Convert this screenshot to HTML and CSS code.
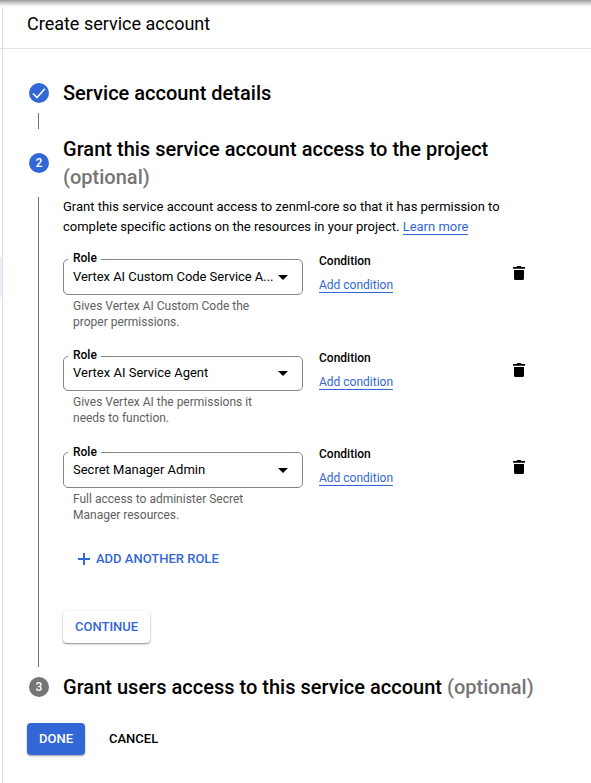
FILE: index.html
```html
<!DOCTYPE html>
<html lang="en">
<head>
<meta charset="utf-8">
<title>Create service account</title>
<link rel="stylesheet" href="styles.css">
</head>
<body>
<div class="page">
  <div class="rail"><div class="rail-head"></div><div class="rail-active"></div></div>
  <main class="main">
    <header class="header"><h1>Create service account</h1></header>
    <section class="step">
      <div class="marker"><span class="badge"><svg width="20" height="20" viewBox="0 0 20 20"><path d="M4 10.500l4 4L15.800 5.800" fill="none" stroke="#fff" stroke-width="1.600"/></svg></span></div>
      <h2 class="title">Service account details</h2>
      <div class="line"></div>
      <div class="short"></div>
    </section>
    <section class="step">
      <div class="marker"><span class="badge">2</span></div>
      <h2 class="title">Grant this service account access to the project <span class="optional">(optional)</span></h2>
      <div class="line"></div>
      <div class="body">
        <p class="intro">Grant this service account access to zenml-core so that it has permission to complete specific actions on the resources in your project. <a class="link">Learn more</a></p>
        <div class="role role-first">
          <div class="field">
            <div class="select"><span class="label">Role</span><span class="value">Vertex AI Custom Code Service A...</span><svg class="arrow" width="10" height="5" viewBox="0 0 10 5"><path d="M0 0h10L5 5z"/></svg></div>
            <p class="hint">Gives Vertex AI Custom Code the proper permissions.</p>
          </div>
          <div class="condition"><strong>Condition</strong><a class="link">Add condition</a></div>
          <svg class="trash" width="12" height="14" viewBox="0 0 12 14"><path d="M0 1h3.500l.8-1h3.400l.8 1H12v1.700H0zM1 4h10v8.500Q11 14 9.500 14h-7Q1 14 1 12.500z"/></svg>
        </div>
        <div class="role role-second">
          <div class="field">
            <div class="select"><span class="label">Role</span><span class="value">Vertex AI Service Agent</span><svg class="arrow" width="10" height="5" viewBox="0 0 10 5"><path d="M0 0h10L5 5z"/></svg></div>
            <p class="hint">Gives Vertex AI the permissions it needs to function.</p>
          </div>
          <div class="condition"><strong>Condition</strong><a class="link">Add condition</a></div>
          <svg class="trash" width="12" height="14" viewBox="0 0 12 14"><path d="M0 1h3.500l.8-1h3.400l.8 1H12v1.700H0zM1 4h10v8.500Q11 14 9.500 14h-7Q1 14 1 12.500z"/></svg>
        </div>
        <div class="role role-third">
          <div class="field">
            <div class="select"><span class="label">Role</span><span class="value">Secret Manager Admin</span><svg class="arrow" width="10" height="5" viewBox="0 0 10 5"><path d="M0 0h10L5 5z"/></svg></div>
            <p class="hint">Full access to administer Secret Manager resources.</p>
          </div>
          <div class="condition"><strong>Condition</strong><a class="link">Add condition</a></div>
          <svg class="trash" width="12" height="14" viewBox="0 0 12 14"><path d="M0 1h3.500l.8-1h3.400l.8 1H12v1.700H0zM1 4h10v8.500Q11 14 9.500 14h-7Q1 14 1 12.500z"/></svg>
        </div>
        <button class="btn add"><svg width="12" height="12" viewBox="0 0 12 12"><path d="M5 0h2v5h5v2H7v5H5V7H0V5h5z" fill="#3367d6"/></svg>ADD ANOTHER ROLE</button>
        <button class="btn continue">CONTINUE</button>
      </div>
    </section>
    <section class="step">
      <div class="marker"><span class="badge pending">3</span></div>
      <h2 class="title">Grant users access to this service account <span class="optional">(optional)</span></h2>
    </section>
    <footer class="actions"><button class="btn done">DONE</button><button class="btn cancel">CANCEL</button></footer>
  </main>
</div>
</body>
</html>
```
FILE: styles.css
```css
* { box-sizing: border-box; }
body {
  margin: 0;
  background: #fff;
  color: #000;
  font-family: Roboto, "Liberation Sans", sans-serif;
  font-size: 13px;
  line-height: 20px;
}
h1, h2, p { margin: 0; }
.page { display: flex; height: 783px; overflow: hidden; position: relative; }
.page::before {
  content: "";
  position: absolute;
  inset: 0 0 auto;
  height: 7px;
  background: linear-gradient(#999, #c4c4c4 35%, #eaeaea 70%, #fff);
}
.rail { width: 2px; flex: none; }
.rail-head { height: 49px; border-bottom: 1px solid #e0e0e0; }
.rail-active { margin-top: 208px; height: 40px; background: #e8eefa; }
.main { flex: 1; border-left: 1px solid #e0e0e0; }
.header { height: 49px; border-bottom: 1px solid #e0e0e0; padding: 12px 0 0 24px; margin-bottom: 30px; }
h1 { font-size: 18px; font-weight: 400; line-height: 24px; }
.step { display: grid; grid-template-columns: 20px 490px; column-gap: 14px; padding-left: 26px; }
.marker { display: flex; align-items: center; }
.badge {
  width: 20px; height: 20px; border-radius: 50%;
  background: #3367d6; color: #fff;
  display: flex; align-items: center; justify-content: center;
  font-size: 12px; font-weight: 500; line-height: 20px;
}
.badge.pending { background: #757575; }
.title { font-size: 20px; font-weight: 500; line-height: 28px; letter-spacing: .012px; }
.optional { color: #757575; }
.line { width: 1px; margin: 6px 0 6px 9px; background: #757575; }
.short { height: 28px; }
.body { height: 482px; padding-top: 6px; display: flex; flex-direction: column; align-items: flex-start; }
.intro { width: 450px; margin-bottom: 22px; letter-spacing: -.006px; }
.link { color: #3367d6; border-bottom: 1px solid #3367d6; line-height: 15px; }
.role { display: flex; height: 97px; flex: none; }
.role-second { height: 96px; }
.role-third { height: 96.5px; }
.field { width: 240px; }
.select {
  position: relative; height: 36px; border: 1px solid #80868b; border-radius: 5px;
  padding: 0 14px 0 9px; display: flex; align-items: center; gap: 4px;
}
.role-second .select { height: 35px; padding-bottom: 1px; }
.label {
  position: absolute; left: 4px; top: -10px; padding: 0 4px 0 5px;
  background: #fff; font-size: 12px; font-weight: 500; line-height: 16px;
}
.role-third .label { top: -9px; }
.value { flex: 1; min-width: 0; white-space: nowrap; }
.role-first .value { letter-spacing: -.04px; }
.arrow { flex: none; }
.hint { width: 200px; margin: 3px 0 0 10px; font-size: 12px; line-height: 16px; color: #616161; }
.condition { width: 194px; margin: -6px 0 0 16px; display: flex; flex-direction: column; align-items: flex-start; gap: 9px; font-size: 12px; line-height: 16px; }
.condition strong { font-weight: 500; }
.condition .link { height: 15px; }
.trash { margin-top: 7px; }
.role-third .trash { margin-top: 8px; }
.btn {
  font: 500 13px/32px Roboto, "Liberation Sans", sans-serif;
  height: 32px; padding: 0 12px; border: 0; border-radius: 4px; background: none; color: #3367d6;
  display: flex; align-items: center; flex: none;
}
.add { margin: -6px 0 0 3px; gap: 6px; }
.continue { margin-top: 36px; box-shadow: 0 1px 3px rgba(0,0,0,.25), 0 1px 1px rgba(0,0,0,.25); }
.actions { display: flex; gap: 12px; padding: 22px 0 0 24px; }
.done { background: #3367d6; color: #fff; box-shadow: 0 1px 2px rgba(0,0,0,.4); }
.cancel { color: #000; }
```
